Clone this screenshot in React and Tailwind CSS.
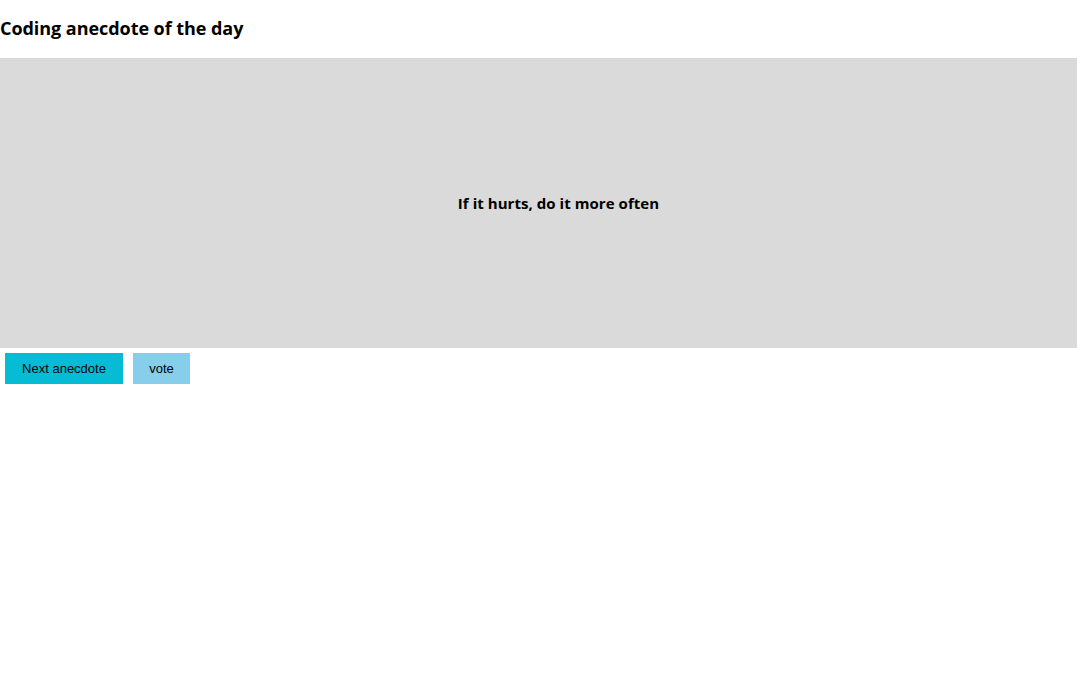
export default function App() {
  return (
    <div className="bg-white min-h-[684px]" style={{ fontFamily: '"Open Sans", sans-serif' }}>
      <h2 className="text-[18px] font-bold leading-[24px] pt-[16px] pb-[18px] text-black tracking-[-0.05px]">
        Coding anecdote of the day
      </h2>
      <div className="h-[290px] bg-[#d9dad9] flex items-center justify-center pl-[40px]">
        <h3 className="text-[15px] font-bold text-black tracking-[0.05px]">If it hurts, do it more often</h3>
      </div>
      <div className="flex" style={{ fontFamily: '"Liberation Sans", Arial, sans-serif' }}>
        <button className="m-[5px] h-[31px] w-[118px] bg-[#06bcd4] text-[13px] text-black">Next anecdote</button>
        <button className="m-[5px] h-[31px] w-[57px] bg-[#87ceeb] text-[13px] text-black">vote</button>
      </div>
    </div>
  );
}
